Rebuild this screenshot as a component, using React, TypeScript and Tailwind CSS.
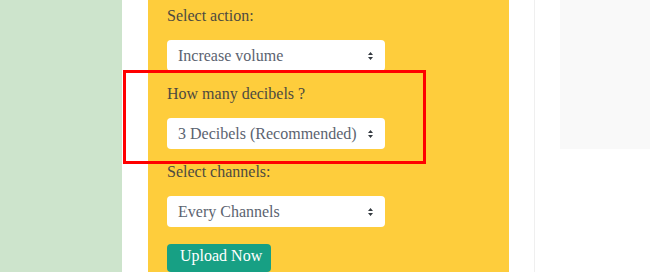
const Caret = () => (
  <svg width="5" height="8" viewBox="0 0 5 8" className="shrink-0">
    <path d="M2.5 0 L5 3 H0 Z M0 5 H5 L2.5 8 Z" fill="#343a40" />
  </svg>
);

const FakeSelect = ({ value }: { value: string }) => (
  <div className="flex h-[31px] w-[218px] items-center justify-between rounded bg-white pl-[11px] pr-[12px] text-[16px] leading-6 text-[#5b6370]">
    <span>{value}</span>
    <Caret />
  </div>
);

const Field = ({ label, value }: { label: string; value: string }) => (
  <div className="mb-[11px] flex flex-col">
    <label className="mb-3 text-[16px] leading-6 text-[#4d4a40]">{label}</label>
    <FakeSelect value={value} />
  </div>
);

export default function App() {
  return (
    <div
      className="relative flex h-[272px] w-[650px] overflow-hidden bg-white"
      style={{ fontFamily: '"Liberation Serif", "DejaVu Serif", serif' }}
    >
      <div className="w-[122px] shrink-0 bg-[#cde4cc]" />
      <div className="w-[26px] shrink-0 bg-white" />
      <div className="flex w-[361px] shrink-0 flex-col bg-[#fecd3c] pl-[19px] pt-[4px]">
        <Field label="Select action:" value="Increase volume" />
        <Field label="How many decibels ?" value="3 Decibels (Recommended)" />
        <Field label="Select channels:" value="Every Channels" />
        <button className="mt-[6px] h-[36px] w-[104px] rounded bg-[#17a084] pl-[13px] pt-[4px] text-left text-[16px] leading-4 text-white self-start items-start flex">
          Upload Now
        </button>
      </div>
      <div className="w-[25px] shrink-0 bg-white" />
      <div className="w-px shrink-0 bg-[#efefef]" />
      <div className="w-[25px] shrink-0 bg-white" />
      <div className="h-[149px] w-[90px] shrink-0 bg-[#f9f9f9]" />

      {/* red annotation box */}
      <div className="pointer-events-none absolute left-[123px] top-[70px] h-[94px] w-[303px] border-[3px] border-[#ff0000]" />
    </div>
  );
}
